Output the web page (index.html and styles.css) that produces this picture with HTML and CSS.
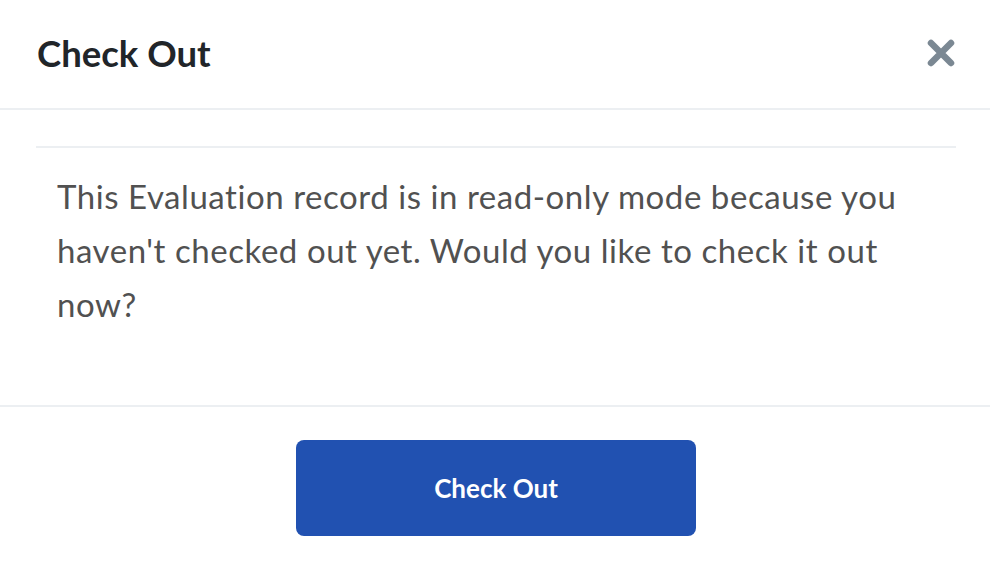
FILE: index.html
```html
<!DOCTYPE html>
<html lang="en">
<head>
<meta charset="utf-8">
<title>Check Out</title>
<link rel="stylesheet" href="styles.css">
</head>
<body>
<div class="modal">
  <header class="modal-header">
    <h1 class="modal-title">Check Out</h1>
    <button class="close" aria-label="Close">
      <svg width="28" height="28" viewBox="0 0 28 28"><path d="M4 4 L24 24 M24 4 L4 24" stroke="#7b8893" stroke-width="6.5" stroke-linecap="round" fill="none"/></svg>
    </button>
  </header>
  <section class="modal-body">
    <div class="divider"></div>
    <p class="message">This Evaluation record is in read-only mode because you haven't checked out yet. Would you like to check it out now?</p>
  </section>
  <footer class="modal-footer">
    <button class="btn-primary">Check Out</button>
  </footer>
</div>
</body>
</html>
```
FILE: styles.css
```css
* { box-sizing: border-box; }
html, body { margin: 0; padding: 0; background: #fff; }
body { font-family: "Lato", "Noto Sans", sans-serif; width: 990px; height: 566px; overflow: hidden; }
.modal { display: flex; flex-direction: column; }
.modal-header {
  height: 110px;
  padding: 0 35px 2px 37px;
  display: flex;
  align-items: center;
  justify-content: space-between;
  border-bottom: 2px solid #eceff2;
}
.modal-title { margin: 0; font-size: 36.5px; font-weight: 700; color: #212529; line-height: 1; }
.close { background: none; border: 0; padding: 0; display: flex; cursor: pointer; }
.modal-body { padding: 36px 34px 0 36px; height: 297px; border-bottom: 2px solid #eceff2; }
.divider { height: 2px; background: #eceff2; }
.message {
  margin: 0;
  padding: 21px 21px 0 21px;
  font-size: 33px;
  letter-spacing: 0.55px;
  line-height: 54px;
  color: #515151;
}
.modal-footer { display: flex; justify-content: center; padding: 33px 0 0 2px; }
.btn-primary {
  width: 400px;
  height: 96px;
  border: 0;
  border-radius: 8px;
  background: #2151b1;
  color: #fff;
  font-family: inherit;
  font-size: 26px;
  font-weight: 700;
  cursor: pointer;
}
```
